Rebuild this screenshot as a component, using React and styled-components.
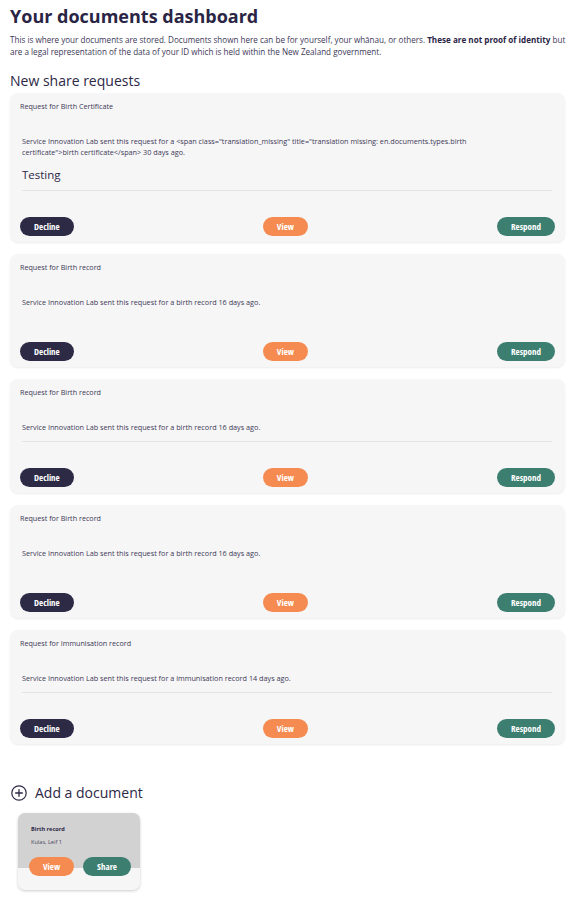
import React from "react";
import styled, { createGlobalStyle } from "styled-components";

const GlobalStyle = createGlobalStyle`
  body {
    margin: 0;
    background: #ffffff;
    font-family: "Open Sans", "Liberation Sans", sans-serif;
    color: #2c2846;
  }
`;

const requests = [
  {
    title: "Request for Birth Certificate",
    body:
      'Service Innovation Lab sent this request for a <span class="translation_missing" title="translation missing: en.documents.types.birth certificate">birth certificate</span> 30 days ago.',
    note: "Testing",
    divider: true,
  },
  {
    title: "Request for Birth record",
    body: "Service Innovation Lab sent this request for a birth record 16 days ago.",
    divider: false,
  },
  {
    title: "Request for Birth record",
    body: "Service Innovation Lab sent this request for a birth record 16 days ago.",
    divider: true,
  },
  {
    title: "Request for Birth record",
    body: "Service Innovation Lab sent this request for a birth record 16 days ago.",
    divider: false,
  },
  {
    title: "Request for Immunisation record",
    body: "Service Innovation Lab sent this request for a immunisation record 14 days ago.",
    divider: true,
  },
];

function App() {
  return (
    <>
      <GlobalStyle />
      <Page>
        <Title>Your documents dashboard</Title>
        <Intro>
          This is where your documents are stored. Documents shown here can be
          for yourself, your whānau, or others.{" "}
          <strong>These are not proof of identity</strong> but are a legal
          representation of the data of your ID which is held within the New
          Zealand government.
        </Intro>

        <SectionTitle>New share requests</SectionTitle>
        <RequestList>
          {requests.map((req, idx) => (
            <RequestCard key={idx}>
              <CardTitle>{req.title}</CardTitle>
              <CardBody divider={req.divider}>
                <p>{req.body}</p>
                {req.note && <Note>{req.note}</Note>}
              </CardBody>
              <Actions>
                <Pill variant="dark">Decline</Pill>
                <Pill variant="orange">View</Pill>
                <Pill variant="green">Respond</Pill>
              </Actions>
            </RequestCard>
          ))}
        </RequestList>

        <AddRow>
          <svg width="16" height="16" viewBox="0 0 16 16">
            <circle cx="8" cy="8" r="7.2" fill="none" stroke="#2c2846" strokeWidth="1.2" />
            <path d="M8 4.2v7.6M4.2 8h7.6" stroke="#2c2846" strokeWidth="1.3" />
          </svg>
          <span>Add a document</span>
        </AddRow>

        <DocCard>
          <DocTop>
            <DocName>Birth record</DocName>
            <DocOwner>Kulas, Leif 1</DocOwner>
          </DocTop>
          <DocActions>
            <Pill variant="orange">View</Pill>
            <Pill variant="green">Share</Pill>
          </DocActions>
        </DocCard>
      </Page>
    </>
  );
}

const Page = styled.div`
  padding: 3px 12px 20px 10px;
`;

const Title = styled.h1`
  margin: 0;
  font-size: 18px;
  font-weight: 700;
  line-height: 26px;
  color: #2a2545;
`;

const Intro = styled.p`
  margin: 5px 0 0;
  font-size: 8.1px;
  line-height: 12px;
  color: #3c3856;

  strong {
    font-weight: 700;
    color: #2a2545;
  }
`;

const SectionTitle = styled.h2`
  margin: 12px 0 1px;
  font-size: 14px;
  font-weight: 400;
  line-height: 22px;
  color: #2c2846;
`;

const RequestList = styled.div`
  display: flex;
  flex-direction: column;
  gap: 12px;
  margin-right: 3px;
`;

const RequestCard = styled.div`
  background: #f6f6f6;
  border-radius: 8px;
  box-shadow: 0 1px 2px rgba(0, 0, 0, 0.08);
  padding: 7px 10px 6px 10px;
`;

const CardTitle = styled.div`
  font-size: 7.2px;
  line-height: 12px;
  color: #3c3856;
`;

const CardBody = styled.div`
  margin: 24px 3px 0 2px;
  padding-bottom: 8px;
  border-bottom: ${(p) => (p.divider ? "1px solid #e4e4e4" : "none")};

  p {
    margin: 0;
    padding-right: 50px;
    font-size: 7.25px;
    line-height: 11px;
    color: #3c3856;
  }
`;

const Note = styled.div`
  margin-top: 10px;
  font-size: 11.5px;
  line-height: 14px;
  color: #2c2846;
`;

const Actions = styled.div`
  display: flex;
  justify-content: space-between;
  align-items: center;
  margin-top: 26px;
`;

const pillColors = {
  dark: "#2d2a46",
  orange: "#f58b51",
  green: "#3c7e70",
};

const Pill = styled.button`
  border: none;
  border-radius: 10px;
  height: 19px;
  padding: 0 14px;
  background: ${(p) => pillColors[p.variant]};
  color: #ffffff;
  font-family: "Open Sans", "Liberation Sans Narrow", sans-serif;
  font-stretch: 75%;
  font-weight: 700;
  font-size: 9px;
  line-height: 19px;
  cursor: pointer;
`;

const AddRow = styled.div`
  display: flex;
  align-items: center;
  gap: 8px;
  margin: 39px 0 0 1px;
  font-size: 14px;
  line-height: 20px;
  color: #2c2846;
`;

const DocCard = styled.div`
  position: relative;
  width: 122px;
  height: 77px;
  margin: 10px 0 0 8px;
  border-radius: 7px;
  background: #f6f6f6;
  box-shadow: 0 1px 3px rgba(0, 0, 0, 0.2);
  overflow: hidden;
`;

const DocTop = styled.div`
  background: #d2d2d2;
  height: 55px;
  padding: 12px 0 0 13px;
  box-sizing: border-box;
`;

const DocName = styled.div`
  font-size: 5.6px;
  font-weight: 700;
  color: #2c2846;
`;

const DocOwner = styled.div`
  margin-top: 5px;
  font-size: 5.6px;
  color: #4a4660;
`;

const DocActions = styled.div`
  position: absolute;
  left: 11px;
  top: 44px;
  display: flex;
  gap: 9px;
`;

export default App;
